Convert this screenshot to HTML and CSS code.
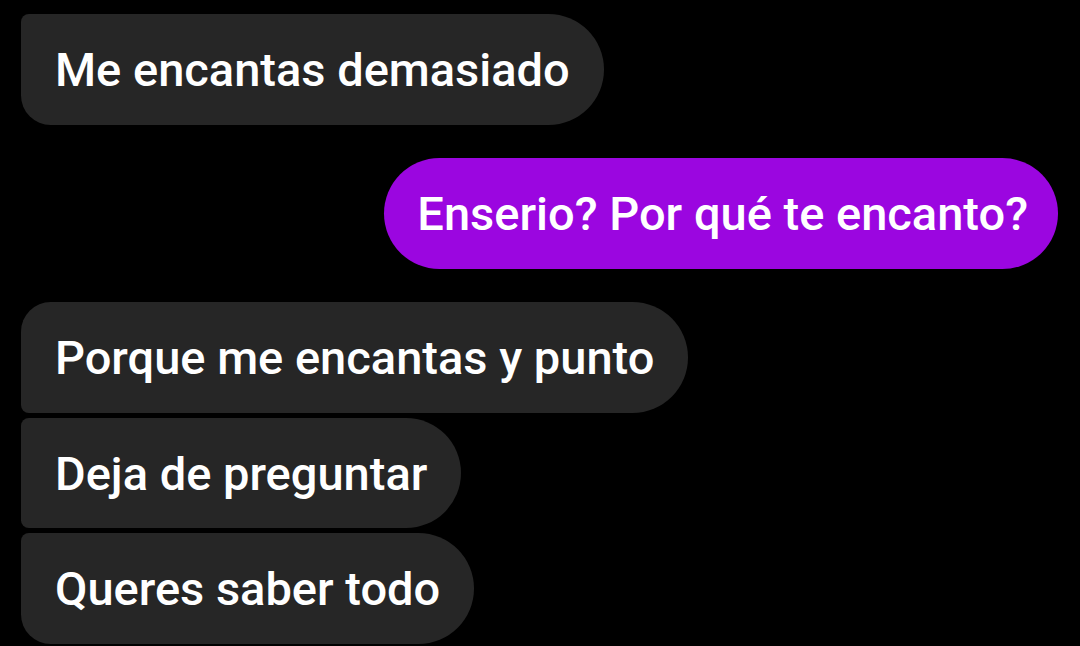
FILE: index.html
```html
<!DOCTYPE html>
<html lang="es">
<head>
<meta charset="utf-8">
<title>Chat</title>
<link rel="stylesheet" href="styles.css">
</head>
<body>
<main class="chat">
  <div class="group group-in">
    <div class="bubble in last cont">Me encantas demasiado</div>
  </div>
  <div class="group group-out">
    <div class="bubble out">Enserio? Por qué te encanto?</div>
  </div>
  <div class="group group-in">
    <div class="bubble in first">Porque me encantas y punto</div>
    <div class="bubble in mid">Deja de preguntar</div>
    <div class="bubble in last">Queres saber todo</div>
  </div>
</main>
</body>
</html>
```
FILE: styles.css
```css
html, body {
  margin: 0;
  padding: 0;
  background: #000;
  height: 100%;
  overflow: hidden;
}
.chat {
  display: flex;
  flex-direction: column;
  gap: 33px;
  padding: 14px 22px 0 21px;
  font-family: Roboto, "Noto Sans", sans-serif;
}
.group {
  display: flex;
  flex-direction: column;
  gap: 5px;
}
.group-in { align-items: flex-start; }
.group-out { align-items: flex-end; }
.bubble {
  color: #fff;
  font-size: 47px;
  font-weight: 500;
  line-height: 55px;
  height: 111px;
  box-sizing: border-box;
  padding: 28px 34px 28px 34px;
  border-radius: 56px;
  white-space: nowrap;
}
.in {
  background: #262626;
}
.out {
  background: #9b06e0;
  padding: 28px 30px 28px 33px;
}
.in.first { border-radius: 30px 56px 56px 8px; }
.in.mid { border-radius: 8px 56px 56px 8px; height: 110px; }
.in.last { border-radius: 8px 56px 56px 30px; }
```
